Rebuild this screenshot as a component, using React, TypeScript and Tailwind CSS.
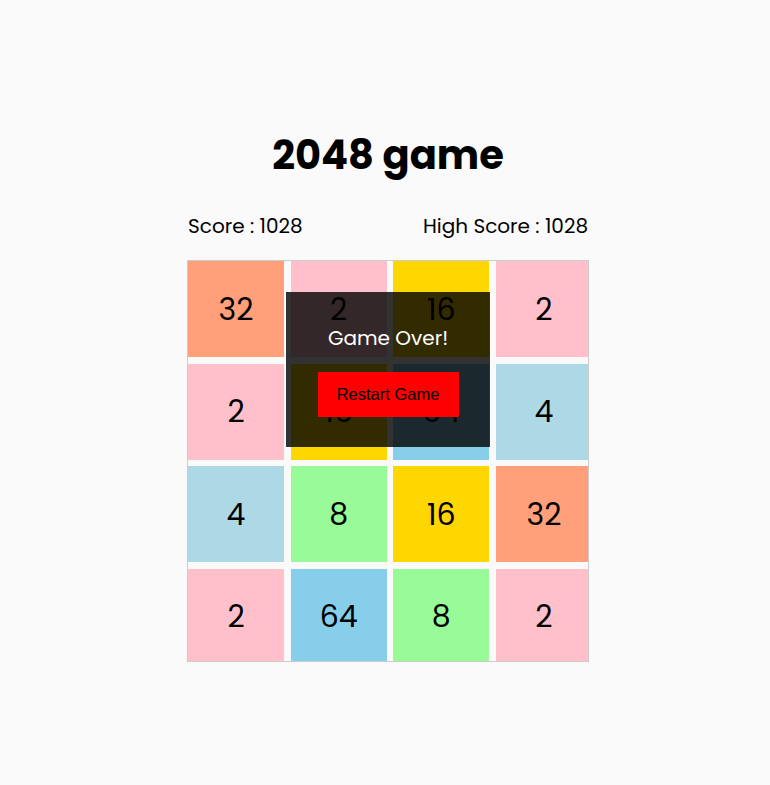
import React from "react";

const tileColors: Record<number, string> = {
  2: "bg-[#ffc0cb]",
  4: "bg-[#add8e6]",
  8: "bg-[#98fb98]",
  16: "bg-[#ffd700]",
  32: "bg-[#ffa07a]",
  64: "bg-[#87ceeb]",
};

const board = [
  [32, 2, 16, 2],
  [2, 16, 64, 4],
  [4, 8, 16, 32],
  [2, 64, 8, 2],
];

const font = "font-['Poppins','Inter','Noto_Sans',sans-serif]";

function Tile({ value }: { value: number }) {
  return (
    <div
      className={`w-[96px] h-[96px] flex items-center justify-center text-[30px] text-black ${tileColors[value]}`}
    >
      {value}
    </div>
  );
}

export default function App() {
  return (
    <div className={`min-h-screen bg-[#fafafa] flex flex-col items-center pt-[125px] pl-[6px] ${font}`}>
      <h1 className="text-[40px] leading-[60px] font-bold text-black">2048 game</h1>
      <div className="mt-[28px] w-[400px] flex justify-between text-[20px] leading-[27px] text-black">
        <span>Score : 1028</span>
        <span>High Score : 1028</span>
      </div>
      <div className="relative mt-[20px] w-[402px] h-[402px] border border-[#cccccc] overflow-hidden">
        <div className="grid grid-cols-[repeat(4,96px)] gap-x-[6.67px] gap-y-[6.5px]">
          {board.flat().map((v, i) => (
            <Tile key={i} value={v} />
          ))}
        </div>
        <div className="absolute left-[98px] top-[31px] w-[204px] h-[155px] bg-black/80 flex flex-col items-center">
          <p className="mt-[32px] text-white text-[20px] leading-[28px]">Game Over!</p>
          <button className="mt-[20px] w-[141px] h-[45px] bg-[#ff0000] text-black text-[16.5px] font-['Liberation_Sans',Arial,sans-serif]">
            Restart Game
          </button>
        </div>
      </div>
    </div>
  );
}
